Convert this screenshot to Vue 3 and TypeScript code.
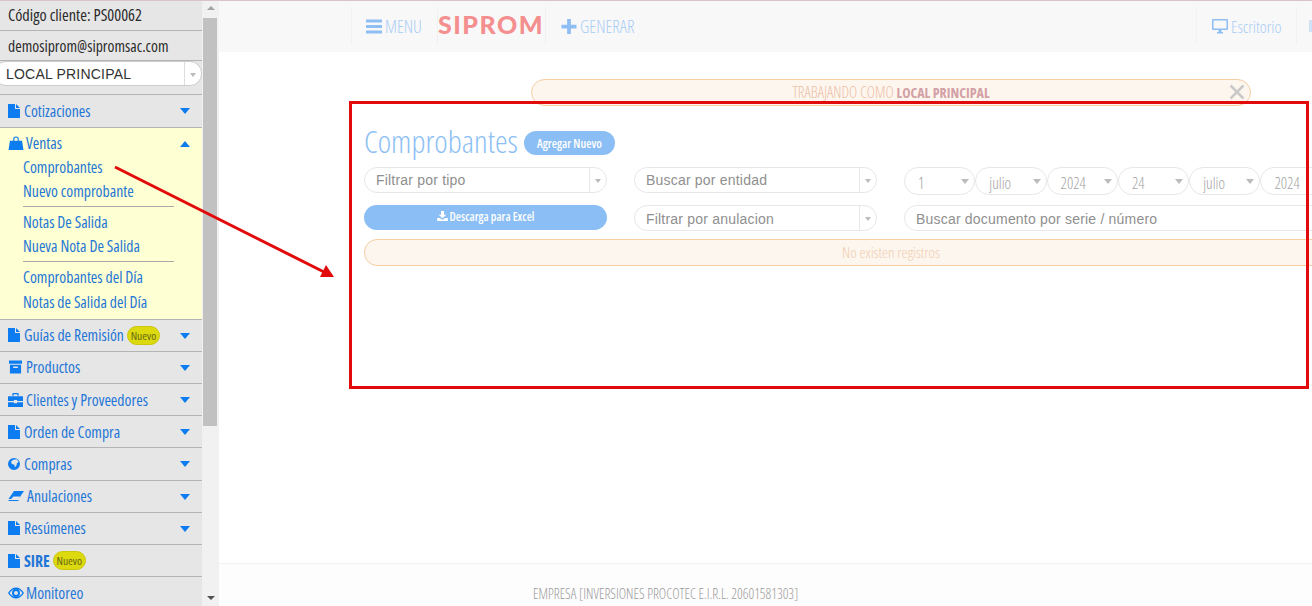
<script setup lang="ts">
interface MenuItem {
  label: string
  icon: string
  badge?: boolean
  caret?: boolean
  bold?: boolean
}

// iconos dibujados a mano, cada uno con su viewBox
const icons: Record<string, { vb: string; d: string }> = {
  file: { vb: '0 0 12 14', d: 'M0 0h7v5h5v9H0zM8 0l4 4H8z' },
  bag: { vb: '0 0 16 15', d: 'M1.500 5h13l1.500 10H0zM5 5V3.500a3 3 0 0 1 6 0V5H9.800V3.500a1.800 1.800 0 0 0-3.600 0V5z' },
  archive: { vb: '0 0 14 14', d: 'M0 0h14v3.500H0zM1 4.500h12V14H1zM4.500 6.500v1.500h5V6.500z' },
  case: { vb: '0 0 14 13', d: 'M0 3h14v4.500H8.500V6.500h-3v1H0zM0 8.500h5.500v1h3v-1H14V13H0zM4 2.500V1a1 1 0 0 1 1-1h4a1 1 0 0 1 1 1v1.500H8.800V1.200H5.200v1.300z' },
  globe: { vb: '0 0 14 14', d: 'M7 0a7 7 0 1 0 0 14A7 7 0 0 0 7 0zM6 2l4-.500 2.500 3-2 1.500-.500 2.500L8 11 7.500 8 4.500 7l-1-2.500z' },
  eraser: { vb: '0 0 16 10', d: 'M6 0h10l-5.500 8H.500zM5.500 5.500L3 8h7.500l2-2.500zM.500 9h10v1H.500z' },
  eye: { vb: '0 0 16 11', d: 'M0 5.500C2 2 4.800 0 8 0s6 2 8 5.500C14 9 11.200 11 8 11S2 9 0 5.500zM8 1.500a4 4 0 1 0 0 8 4 4 0 0 0 0-8zM8 3.500a2 2 0 1 1 0 4 2 2 0 0 1 0-4zM1.600 5.500C3 7.800 5 9.500 8 9.500s5-1.700 6.400-4C13 3.200 11 1.500 8 1.500S3 3.200 1.600 5.500z' },
}

const before: MenuItem[] = [{ label: 'Cotizaciones', icon: 'file', caret: true }]
const after: MenuItem[] = [
  { label: 'Guías de Remisión', icon: 'file', badge: true, caret: true },
  { label: 'Productos', icon: 'archive', caret: true },
  { label: 'Clientes y Proveedores', icon: 'case', caret: true },
  { label: 'Orden de Compra', icon: 'file', caret: true },
  { label: 'Compras', icon: 'globe', caret: true },
  { label: 'Anulaciones', icon: 'eraser', caret: true },
  { label: 'Resúmenes', icon: 'file', caret: true },
  { label: 'SIRE', icon: 'file', badge: true, bold: true },
  { label: 'Monitoreo', icon: 'eye' },
]
const dates = ['1', 'julio', '2024', '24', 'julio', '2024']
</script>

<template>
  <div class="page">
    <aside class="side">
      <div class="menu">
        <div class="info top">Código cliente: PS00062</div>
        <div class="info">demosiprom@sipromsac.com</div>
        <div class="local">
          <div class="local-sel"><span>LOCAL PRINCIPAL</span><i class="arrow"></i></div>
        </div>

        <div v-for="item in before" :key="item.label" class="row first-row">
          <svg class="ico" :class="item.icon" :viewBox="icons[item.icon].vb"><path :d="icons[item.icon].d" fill-rule="evenodd" /></svg>
          <span>{{ item.label }}</span>
          <i class="caret"></i>
        </div>

        <div class="open">
          <div class="open-head">
            <svg class="ico bag" :viewBox="icons.bag.vb"><path :d="icons.bag.d" /></svg>
            <span>Ventas</span>
            <i class="caret up"></i>
          </div>
          <a>Comprobantes</a>
          <a>Nuevo comprobante</a>
          <hr />
          <a>Notas De Salida</a>
          <a>Nueva Nota De Salida</a>
          <hr />
          <a>Comprobantes del Día</a>
          <a>Notas de Salida del Día</a>
        </div>

        <div v-for="item in after" :key="item.label" class="row" :class="{ bold: item.bold }">
          <svg class="ico" :class="item.icon" :viewBox="icons[item.icon].vb"><path :d="icons[item.icon].d" fill-rule="evenodd" /></svg>
          <span>{{ item.label }}</span>
          <b v-if="item.badge" class="badge">Nuevo</b>
          <i v-if="item.caret" class="caret"></i>
        </div>
      </div>
      <div class="scroll">
        <i class="sc-up"></i>
        <div class="thumb"></div>
        <i class="sc-down"></i>
      </div>
    </aside>

    <div class="right">
      <header class="nav">
        <div class="nav-item first">
          <svg class="nav-ico" viewBox="0 0 16 14"><path d="M0 0h16v3H0zM0 5.500h16v3H0zM0 11h16v3H0z" /></svg>
          <span>MENU</span>
        </div>
        <div class="logo">SIPROM</div>
        <div class="nav-item gen">
          <svg class="nav-ico" viewBox="0 0 16 16"><path d="M6 0h4v6h6v4h-6v6H6v-6H0V6h6z" /></svg>
          <span>GENERAR</span>
        </div>
        <div class="nav-item desk">
          <svg class="nav-ico" viewBox="0 0 16 15"><path d="M1 0h14a1 1 0 0 1 1 1v9a1 1 0 0 1-1 1H1a1 1 0 0 1-1-1V1a1 1 0 0 1 1-1zM1.500 1.500v8h13v-8zM5 13h6v1.500H5zM6.500 11h3v2h-3z" fill-rule="evenodd" /></svg>
          <span>Escritorio</span>
        </div>
        <div class="nav-item stub"><i></i></div>
      </header>

      <main class="content">
        <div class="box">
          <div class="alert">
            TRABAJANDO COMO <b>LOCAL PRINCIPAL</b>
            <svg class="close" viewBox="0 0 16 16"><path d="M1.500 1.500l13 13M14.500 1.500l-13 13" /></svg>
          </div>

          <div class="title">
            <h1>Comprobantes</h1>
            <button class="add">Agregar Nuevo</button>
          </div>

          <div class="filters">
            <div class="sel"><span>Filtrar por tipo</span><i class="arrow"></i></div>
            <div class="sel"><span>Buscar por entidad</span><i class="arrow"></i></div>
            <div class="dates">
              <div v-for="(d, i) in dates" :key="i" class="date">
                <span>{{ d }}</span><i class="date-arrow"></i>
              </div>
            </div>
            <button class="excel">
              <svg viewBox="0 0 14 13"><path d="M5 0h4v5h3L7 9.500 2 5h3zM0 9h3.500L7 11.500 10.500 9H14v4H0z" /></svg>
              Descarga para Excel
            </button>
            <div class="sel low"><span>Filtrar por anulacion</span><i class="arrow"></i></div>
            <div class="search">Buscar documento por serie / número</div>
          </div>

          <div class="empty">No existen registros</div>
        </div>
      </main>

      <footer class="foot">EMPRESA [INVERSIONES PROCOTEC E.I.R.L. 20601581303]</footer>
    </div>

    <!-- anotaciones en rojo sobre la captura -->
    <div class="mark"></div>
    <svg class="pointer" width="1312" height="606" viewBox="0 0 1312 606">
      <path d="M115 167L326 273" />
      <polygon points="334,277 320,277 326,265" />
    </svg>
  </div>
</template>

<style>
html, body {
  margin: 0;
  height: 100%;
  overflow: hidden;
  background: #fff;
}
</style>

<style scoped>
.page {
  position: relative;
  display: flex;
  width: 1312px;
  height: 606px;
  overflow: hidden;
  font-family: "Open Sans", sans-serif;
  font-stretch: 75%;
  border-top: 1px solid #d9c3cb;
  box-sizing: border-box;
}

/* menu lateral */
.side {
  display: flex;
  flex: 0 0 219px;
  height: 606px;
  margin-top: -1px;
}
.menu {
  width: 202px;
  background: #e6e6e6;
  color: #1f76d6;
  font-size: 15.700px;
}
.info {
  height: 30px;
  line-height: 31px;
  padding-left: 8px;
  box-sizing: border-box;
  color: #2b2b2b;
  border-bottom: 1px solid #b4b4b4;
  font-size: 15.700px;
}
.info.top {
  height: 31px;
  font-size: 16.300px;
}
.local {
  height: 34px;
  box-sizing: border-box;
  border-bottom: 1px solid #b4b4b4;
}
.local-sel {
  display: flex;
  align-items: center;
  justify-content: space-between;
  height: 25px;
  margin: 0 0 0 -6px;
  padding-left: 11px;
  box-sizing: border-box;
  background: #fff;
  border: 1px solid #ccc;
  border-radius: 12px;
  font: 14px "Liberation Sans", sans-serif;
  letter-spacing: 0.200px;
  color: #333;
}
.arrow {
  position: relative;
  flex: 0 0 16px;
  align-self: stretch;
  border-left: 1px solid #ddd;
}
.arrow::after {
  content: "";
  position: absolute;
  left: 5px;
  top: 50%;
  margin-top: -1px;
  border: 3px solid transparent;
  border-top: 4px solid #bbb;
}
.row {
  display: flex;
  align-items: center;
  height: 32.200px;
  padding-left: 8px;
  box-sizing: border-box;
  border-bottom: 1px solid #b4b4b4;
  position: relative;
}
.first-row {
  height: 33px;
}
.row.bold {
  font-weight: 700;
}
.ico {
  height: 14px;
  fill: #0d7cf0;
  flex: none;
}
.ico.file, .ico.globe {
  width: 12px;
  margin-right: 4px;
}
.ico.bag {
  width: 16px;
  margin-right: 2px;
}
.ico.archive {
  width: 13px;
  margin: 0 4px 0 1px;
}
.ico.case {
  width: 15px;
  margin-right: 3px;
}
.ico.eraser {
  width: 16px;
  margin-right: 3px;
}
.ico.eye {
  width: 16px;
  margin-right: 2px;
}
.caret {
  position: absolute;
  left: 180px;
  top: 13px;
  border-left: 5px solid transparent;
  border-right: 5px solid transparent;
  border-top: 6px solid #0d7cf0;
}
.caret.up {
  border-top: 0;
  border-bottom: 6px solid #0d7cf0;
}
.badge {
  width: 33px;
  margin-left: 3px;
  height: 19px;
  line-height: 17px;
  box-sizing: border-box;
  text-align: center;
  font-size: 11.500px;
  font-weight: 400;
  color: #6a6a12;
  background: #dcd90e;
  border: 1px solid #cbc70a;
  border-radius: 10px;
}
.open {
  position: relative;
  height: 191.600px;
  box-sizing: border-box;
  background: #feffd2;
  border-bottom: 1px solid #b4b4b4;
}
.open-head {
  display: flex;
  align-items: center;
  height: 26.700px;
  padding: 3px 0 0 8px;
  box-sizing: border-box;
}
.open a {
  display: block;
  height: 24.500px;
  line-height: 24.500px;
  padding-left: 23px;
}
.open hr {
  margin: 2px 28px 3.300px 23px;
  border: 0;
  border-top: 1px solid #aaa;
}
.scroll {
  position: relative;
  width: 17px;
  background: #f1f1f1;
}
.thumb {
  position: absolute;
  left: 1px;
  right: 2px;
  top: 18px;
  height: 408px;
  background: #c1c1c1;
}
.sc-up, .sc-down {
  position: absolute;
  left: 5px;
  border-left: 4px solid transparent;
  border-right: 4px solid transparent;
}
.sc-up {
  top: 6px;
  border-bottom: 4px solid #a3a3a3;
}
.sc-down {
  bottom: 6px;
  border-top: 4px solid #505050;
}

/* parte derecha */
.right {
  display: flex;
  flex-direction: column;
  flex: 1;
  min-width: 0;
}
.nav {
  display: flex;
  align-items: center;
  height: 51px;
  padding: 0 0 1px 132px;
  box-sizing: border-box;
  background: #f8f8f8;
  color: #a9cdf5;
  font-size: 17.600px;
  font-weight: 300;
  flex: none;
}
.nav-item {
  display: flex;
  align-items: center;
  height: 38px;
  border-left: 1px solid #f1f1f1;
  box-sizing: border-box;
}
.nav-ico {
  width: 16px;
  height: 15px;
  margin-right: 3px;
  fill: #8fbef4;
}
.first {
  width: 86px;
  padding-left: 14px;
}
.logo {
  width: 109px;
  height: 38px;
  box-sizing: border-box;
  border-left: 1px solid #f1f1f1;
  border-right: 1px solid #f1f1f1;
  font: 900 25px/35px Lato, sans-serif;
  letter-spacing: 1.500px;
  color: #f58e8e;
}
.gen {
  border: 0;
  padding-left: 15px;
}
.desk {
  margin-left: auto;
  width: 100px;
  padding-left: 15px;
  font-size: 16.600px;
}
.stub {
  width: 16px;
  padding-left: 12px;
}
.stub i {
  width: 4px;
  height: 12px;
  background: #cfe2f8;
}
.content {
  flex: 1;
  padding-left: 145px;
  min-height: 0;
}
.box {
  width: 1054px;
  padding-top: 27px;
}
.alert {
  position: relative;
  width: 720px;
  height: 27px;
  line-height: 25px;
  margin: 0 auto;
  box-sizing: border-box;
  text-align: center;
  background: #fdf6ee;
  border: 1px solid #f4cda3;
  border-radius: 14px;
  color: #ecbfa9;
  font-size: 15.500px;
  font-weight: 300;
}
.alert b {
  color: #d3a0a6;
  font-size: 14px;
  font-weight: 700;
}
.close {
  position: absolute;
  right: 5px;
  top: 4px;
  width: 16px;
  height: 16px;
  fill: none;
  stroke: #c9c9c9;
  stroke-width: 2.500;
}
.title {
  display: flex;
  align-items: center;
  height: 40px;
  margin: 14px 0 7px;
  gap: 6px;
}
h1 {
  margin: 0;
  font-size: 32px;
  font-weight: 300;
  color: #8dbff5;
}
.add {
  height: 24px;
  width: 91px;
  margin-top: 6px;
  padding: 0;
  border: 0;
  border-radius: 12px;
  background: #8bbef4;
  color: #fff;
  font: 600 12px "Open Sans", sans-serif;
  font-stretch: 75%;
}
.filters {
  display: grid;
  grid-template-columns: 243px 243px 1fr;
  grid-template-rows: 26px 26px;
  column-gap: 27px;
  row-gap: 12px;
}
.filters > .sel, .search {
  font: 14px "Liberation Sans", sans-serif;
  letter-spacing: 0.200px;
  color: #8f8f8f;
}
.sel {
  display: flex;
  align-items: center;
  justify-content: space-between;
  padding-left: 11px;
  background: #fff;
  border: 1px solid #e7e7e7;
  border-radius: 13px;
}
.sel.low span {
  margin-top: 1px;
}
.sel .arrow {
  border-left-color: #e7e7e7;
}
.dates {
  display: flex;
  height: 28px;
}
.date {
  display: flex;
  align-items: center;
  justify-content: space-between;
  flex: 0 0 71.300px;
  box-sizing: border-box;
  padding: 4px 5px 0 13px;
  border: 1px solid #e7e7e7;
  border-radius: 14px;
  color: #a3a3a3;
  font-size: 15.500px;
  font-weight: 300;
}
.date-arrow {
  margin-top: -4px;
  border-left: 4px solid transparent;
  border-right: 4px solid transparent;
  border-top: 5px solid #bbb;
}
.excel {
  display: flex;
  align-items: center;
  justify-content: center;
  gap: 2px;
  height: 25px;
  padding: 0 0 3px;
  border: 0;
  border-radius: 13px;
  background: #8bbef4;
  color: #fff;
  font: 600 11.800px "Open Sans", sans-serif;
  font-stretch: 75%;
}
.excel svg {
  width: 11px;
  height: 10px;
  fill: #fff;
}
.search {
  padding: 1px 0 0 11px;
  line-height: 24px;
  border: 1px solid #e7e7e7;
  border-radius: 13px;
}
.empty {
  height: 27px;
  line-height: 25px;
  margin-top: 8px;
  box-sizing: border-box;
  text-align: center;
  background: #fdf6ee;
  border: 1px solid #f4cda3;
  border-radius: 13px;
  color: #f0cdb0;
  font-size: 15.300px;
  font-weight: 300;
}
.foot {
  flex: none;
  height: 43px;
  padding: 20px 0 0 314px;
  box-sizing: border-box;
  background: #fdfdfd;
  border-top: 1px solid #f3f3f3;
  font-size: 14px;
  font-weight: 300;
  color: #9a9a9a;
  white-space: nowrap;
}

/* anotaciones */
.mark {
  position: absolute;
  left: 349px;
  top: 100px;
  width: 960px;
  height: 288px;
  box-sizing: border-box;
  border: 3px solid #e20b0b;
}
.pointer {
  position: absolute;
  left: 0;
  top: -1px;
  pointer-events: none;
}
.pointer path {
  fill: none;
  stroke: #e20b0b;
  stroke-width: 3;
}
.pointer polygon {
  fill: #e20b0b;
}
</style>
